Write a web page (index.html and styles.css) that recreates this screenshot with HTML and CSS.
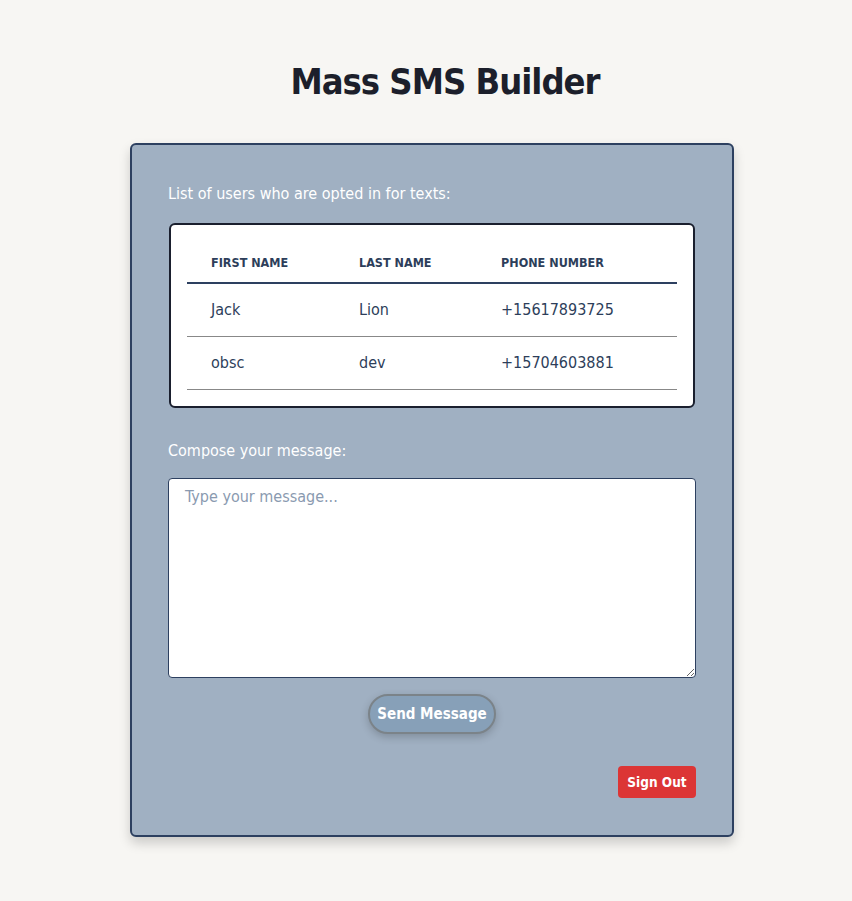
FILE: index.html
```html
<!DOCTYPE html>
<html lang="en">
<head>
<meta charset="utf-8">
<title>Mass SMS Builder</title>
<link rel="stylesheet" href="styles.css">
</head>
<body>
<main class="page">
  <h1 class="title">Mass SMS Builder</h1>
  <section class="card">
    <p class="label">List of users who are opted in for texts:</p>
    <div class="table-box">
      <table class="users">
        <thead>
          <tr><th class="c1">First Name</th><th class="c2">Last Name</th><th class="c3">Phone Number</th></tr>
        </thead>
        <tbody>
          <tr><td>Jack</td><td>Lion</td><td>+15617893725</td></tr>
          <tr><td>obsc</td><td>dev</td><td>+15704603881</td></tr>
        </tbody>
      </table>
    </div>
    <p class="label compose">Compose your message:</p>
    <textarea class="message" placeholder="Type your message..."></textarea>
    <div class="send-row"><button class="send">Send Message</button></div>
    <div class="signout-row"><button class="signout">Sign Out</button></div>
  </section>
</main>
</body>
</html>
```
FILE: styles.css
```css
* { box-sizing: border-box; }
html, body { margin: 0; padding: 0; }
body {
  background: #f7f6f3;
  font-family: "Liberation Sans Narrow", "DejaVu Sans Condensed", "Liberation Sans", sans-serif;
  color: #1c1f2b;
}
.page {
  display: flex;
  flex-direction: column;
  align-items: center;
  padding: 58px 0 60px 12px;
}
.title {
  margin: 0 0 37px 26px;
  font-size: 36px;
  line-height: 48px;
  letter-spacing: -1px;
  font-weight: 700;
  color: #1c1f2b;
}
.card {
  width: 604px;
  height: 694px;
  background: #a0b0c2;
  border: 2px solid #2d4060;
  border-radius: 6px;
  padding: 38px 36px 0 36px;
  box-shadow: 0 6px 12px rgba(0,0,0,0.18);
  display: flex;
  flex-direction: column;
}
.label {
  margin: 0;
  color: #ffffff;
  font-size: 16px;
  line-height: 22px;
}
.table-box {
  margin-top: 18px;
  margin-left: 1px;
  margin-right: 1px;
  background: #fff;
  border: 2px solid #1a1f2e;
  border-radius: 6px;
  padding: 17px 16px 16px 16px;
}
.users {
  width: 100%;
  border-collapse: collapse;
  color: #2d3e5a;
}
.users th {
  text-align: left;
  text-transform: uppercase;
  font-size: 12.5px;
  font-weight: 700;
  padding: 0 24px;
  height: 41px;
  border-bottom: 2px solid #2d4060;
}
.users th.c1 { width: 148px; }
.users th.c2 { width: 142px; }
.users td {
  font-size: 16px;
  padding: 0 24px;
  height: 53px;
  border-bottom: 1px solid #888888;
}
.compose { margin-top: 32px; }
.message {
  margin-top: 16px;
  width: 528px;
  height: 200px;
  border: 1px solid #2d4060;
  border-radius: 4px;
  background: #fff;
  padding: 8px 16px;
  font-family: inherit;
  font-size: 16px;
  color: #1c1f2b;
  resize: vertical;
}
.message::placeholder { color: #8a9ab0; }
.send-row {
  display: flex;
  justify-content: center;
  margin-top: 16px;
}
.send {
  width: 128px;
  height: 40px;
  border-radius: 20px;
  background: #87a0b8;
  border: 2px solid #7b8389;
  color: #fff;
  font-family: inherit;
  font-size: 15px;
  font-weight: 700;
  box-shadow: 0 3px 8px rgba(0,0,0,0.2);
  padding: 0;
}
.signout-row {
  display: flex;
  justify-content: flex-end;
  margin-top: 32px;
}
.signout {
  width: 78px;
  height: 32px;
  border: none;
  border-radius: 4px;
  background: #dc3535;
  color: #fff;
  font-family: inherit;
  font-size: 13.5px;
  font-weight: 700;
  padding: 0;
}
```
